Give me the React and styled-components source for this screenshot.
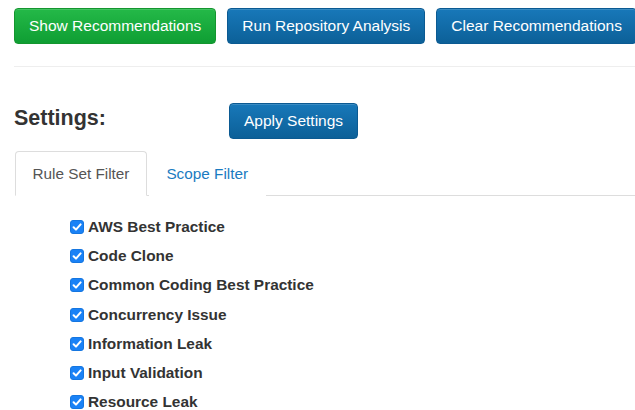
import React, { useState } from "react";
import styled, { createGlobalStyle } from "styled-components";

const GlobalStyle = createGlobalStyle`
  body {
    margin: 0;
    background: #fff;
    font-family: "Liberation Sans", Arial, sans-serif;
    color: #333;
  }
`;

const ruleSets = [
  "AWS Best Practice",
  "Code Clone",
  "Common Coding Best Practice",
  "Concurrency Issue",
  "Information Leak",
  "Input Validation",
  "Resource Leak",
];

export default function App() {
  const [active, setActive] = useState("rules");
  const [checked, setChecked] = useState(ruleSets.map(() => true));

  const toggle = (i) =>
    setChecked((prev) => prev.map((v, j) => (j === i ? !v : v)));

  return (
    <Page>
      <GlobalStyle />
      <Toolbar>
        <Button variant="success">Show Recommendations</Button>
        <Button>Run Repository Analysis</Button>
        <Button>Clear Recommendations</Button>
      </Toolbar>
      <Divider />
      <SettingsRow>
        <Title>Settings:</Title>
        <Button>Apply Settings</Button>
      </SettingsRow>
      <Tabs>
        <Tab active={active === "rules"} onClick={() => setActive("rules")}>
          Rule Set Filter
        </Tab>
        <Tab active={active === "scope"} onClick={() => setActive("scope")}>
          Scope Filter
        </Tab>
      </Tabs>
      <RuleList>
        {ruleSets.map((name, i) => (
          <RuleRow key={name} onClick={() => toggle(i)}>
            <Check checked={checked[i]}>
              {checked[i] && (
                <svg width="10" height="10" viewBox="0 0 10 10">
                  <path
                    d="M1.6 5.2 L4 7.6 L8.6 2.4"
                    fill="none"
                    stroke="#fff"
                    strokeWidth="2"
                    strokeLinecap="round"
                    strokeLinejoin="round"
                  />
                </svg>
              )}
            </Check>
            <span>{name}</span>
          </RuleRow>
        ))}
      </RuleList>
    </Page>
  );
}

// styling for component
const Page = styled.div`
  padding: 8px 0 0 14px;
  width: 621px;
  overflow: hidden;
`;

const Toolbar = styled.div`
  display: flex;
  gap: 11px;
  white-space: nowrap;
`;

const Button = styled.button`
  flex: none;
  height: 36px;
  padding: 0 14px;
  font-family: "Liberation Sans", Arial, sans-serif;
  font-size: 15.5px;
  color: #fff;
  border-radius: 4px;
  cursor: pointer;
  border: 1px solid
    ${(p) => (p.variant === "success" ? "#14962f" : "#0b5a92")};
  background: ${(p) =>
    p.variant === "success"
      ? "linear-gradient(#24b948, #0f9e33)"
      : "linear-gradient(#1878b9, #0c6098)"};
  box-shadow: inset 0 1px 0 rgba(255, 255, 255, 0.15);
`;

const Divider = styled.hr`
  margin: 22px 0 0;
  border: 0;
  border-top: 1px solid #eee;
`;

const SettingsRow = styled.div`
  display: flex;
  align-items: flex-start;
  margin-top: 36px;
`;

const Title = styled.h3`
  width: 215px;
  margin: 0;
  padding-top: 3px;
  font-size: 21.5px;
  font-weight: bold;
  color: #333;
`;

const Tabs = styled.div`
  display: flex;
  margin: 12px 0 0 1px;
  border-bottom: 1px solid #ddd;
`;

const Tab = styled.div`
  height: 45px;
  box-sizing: border-box;
  margin: 0 2px -1px 0;
  padding: 0 16.5px;
  display: flex;
  align-items: center;
  font-size: 15.3px;
  cursor: pointer;
  border: 1px solid ${(p) => (p.active ? "#ddd" : "transparent")};
  border-bottom-color: ${(p) => (p.active ? "#fff" : "transparent")};
  border-radius: 4px 4px 0 0;
  background: #fff;
  color: ${(p) => (p.active ? "#555" : "#1a7bc1")};
`;

const RuleList = styled.div`
  padding: 16px 0 0 56px;
`;

const RuleRow = styled.label`
  display: flex;
  align-items: center;
  gap: 4px;
  height: 29.3px;
  font-size: 15.4px;
  font-weight: bold;
  color: #333;
  cursor: pointer;
`;

const Check = styled.span`
  width: 14px;
  height: 14px;
  box-sizing: border-box;
  border-radius: 3px;
  display: flex;
  align-items: center;
  justify-content: center;
  background: ${(p) => (p.checked ? "#1a82f6" : "#fff")};
  border: 1px solid ${(p) => (p.checked ? "#1576e0" : "#aaa")};
`;
